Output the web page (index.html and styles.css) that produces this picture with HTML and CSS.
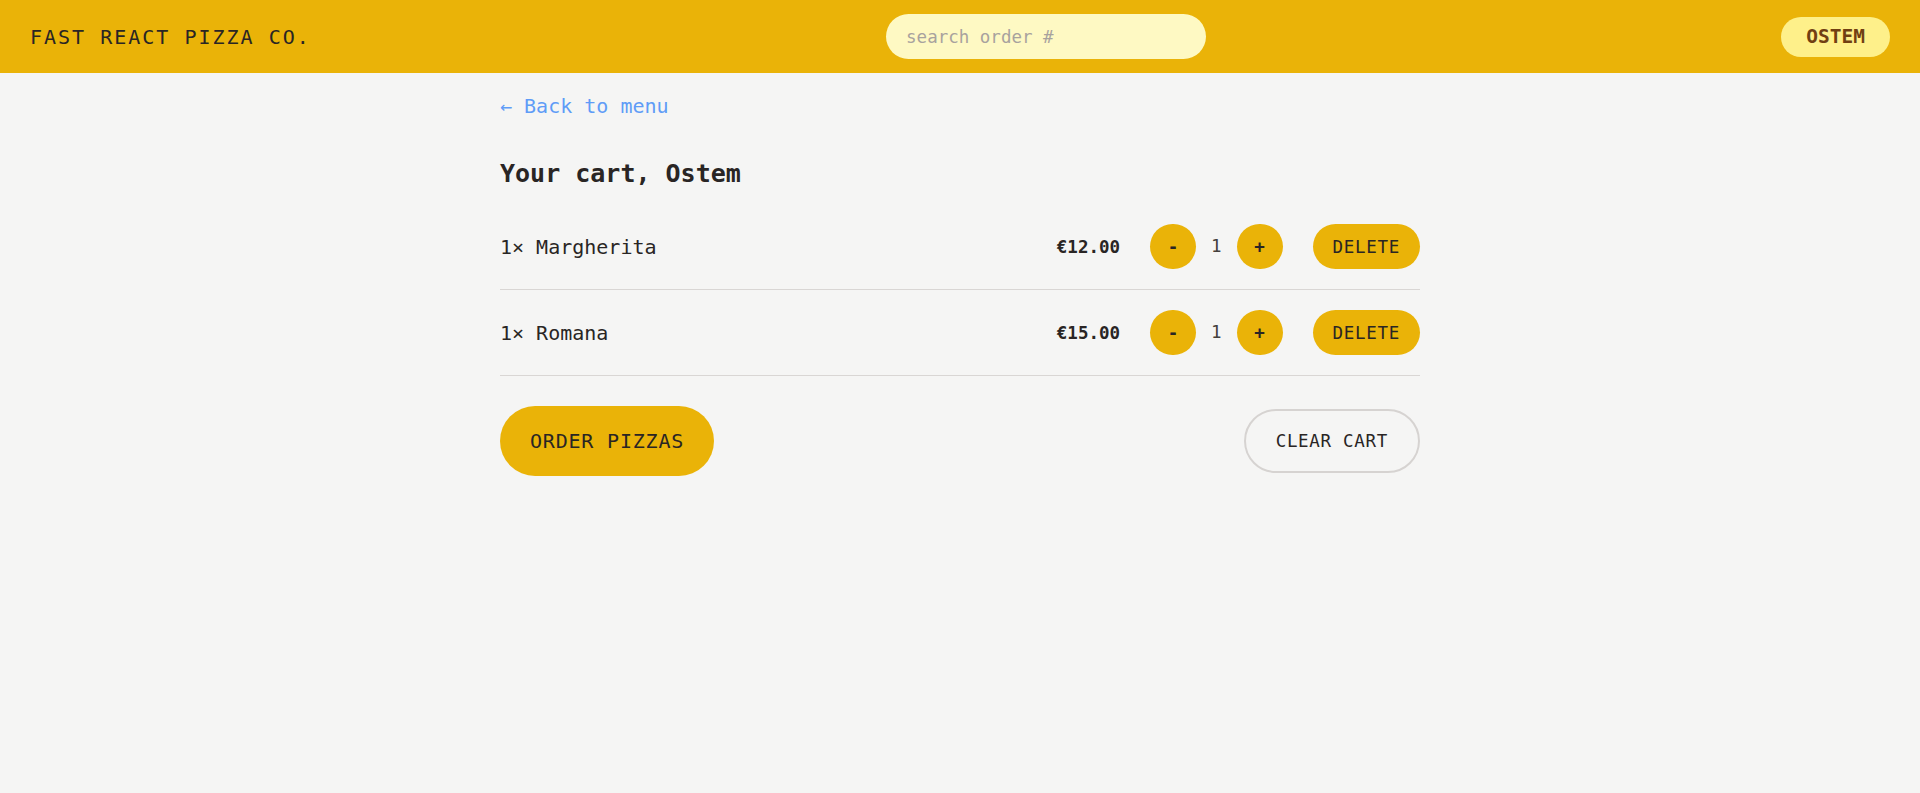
FILE: index.html
```html
<!DOCTYPE html>
<html lang="en">
<head>
<meta charset="utf-8">
<title>Fast React Pizza Co.</title>
<link rel="stylesheet" href="styles.css">
</head>
<body>
<header class="header">
  <a class="logo" href="#">Fast React Pizza Co.</a>
  <input class="search" type="text" placeholder="search order #">
  <div class="username">Ostem</div>
</header>
<main class="main">
  <a class="back" href="#">&larr; Back to menu</a>
  <h2 class="title">Your cart, Ostem</h2>
  <ul class="cart">
    <li class="item">
      <p class="item-name">1&times; Margherita</p>
      <div class="item-actions">
        <p class="price">€12.00</p>
        <div class="qty">
          <button class="btn-round">-</button>
          <span class="qty-num">1</span>
          <button class="btn-round">+</button>
        </div>
        <button class="btn-small">Delete</button>
      </div>
    </li>
    <li class="item">
      <p class="item-name">1&times; Romana</p>
      <div class="item-actions">
        <p class="price">€15.00</p>
        <div class="qty">
          <button class="btn-round">-</button>
          <span class="qty-num">1</span>
          <button class="btn-round">+</button>
        </div>
        <button class="btn-small">Delete</button>
      </div>
    </li>
  </ul>
  <div class="footer-actions">
    <button class="btn-primary">Order pizzas</button>
    <button class="btn-secondary">Clear cart</button>
  </div>
</main>
</body>
</html>
```

FILE: styles.css
```css
* { box-sizing: border-box; }
html, body { margin: 0; padding: 0; }
body {
  background: #f5f5f4;
  color: #292524;
  font-family: "DejaVu Sans Mono", "Liberation Mono", monospace;
  min-height: 793px;
}
.header {
  display: flex;
  align-items: center;
  justify-content: space-between;
  height: 73px;
  padding: 0 30px;
  background: #eab308;
  text-transform: uppercase;
}
.logo {
  font-size: 20px;
  letter-spacing: 0.1em;
  color: #292524;
  text-decoration: none;
}
.search {
  width: 320px;
  height: 45px;
  border: none;
  border-radius: 9999px;
  background: #fef9c3;
  padding: 0 20px;
  font-family: inherit;
  font-size: 17.5px;
  color: #292524;
  outline: none;
}
.search::placeholder { color: #a8a29e; }
.username {
  height: 40px;
  display: flex;
  align-items: center;
  padding: 0 25px;
  border-radius: 9999px;
  background: #fef08a;
  color: #713f12;
  font-size: 19.5px;
  font-weight: 700;
}
.main {
  width: 920px;
  margin: 0 auto;
  padding-top: 18px;
}
.back {
  display: inline-block;
  font-size: 20px;
  line-height: 30px;
  color: #5f9cf7;
  text-decoration: none;
}
.title {
  margin: 35px 0 0;
  font-size: 25px;
  line-height: 35px;
  font-weight: 700;
}
.cart {
  list-style: none;
  margin: 13px 0 0;
  padding: 0;
  border-bottom: 1px solid #d9d6d4;
}
.item {
  display: flex;
  align-items: center;
  justify-content: space-between;
  padding: 20px 0;
}
.item + .item { border-top: 1px solid #d9d6d4; }
.item-name {
  margin: 0;
  font-size: 20px;
  line-height: 30px;
}
.item-actions {
  display: flex;
  align-items: center;
  gap: 30px;
}
.price {
  margin: 0;
  font-size: 17.5px;
  font-weight: 700;
}
.qty {
  display: flex;
  align-items: center;
  gap: 15px;
}
.qty-num {
  font-size: 17.5px;
  line-height: 25px;
  color: #44403c;
}
button {
  font-family: inherit;
  border: none;
  cursor: pointer;
  color: #292524;
  text-transform: uppercase;
  letter-spacing: 0.7px;
  font-weight: 400;
}
.btn-round {
  width: 46px;
  height: 45px;
  border-radius: 9999px;
  background: #eab308;
  font-size: 17.5px;
  font-weight: 700;
  letter-spacing: 0;
  padding: 0;
}
.btn-small {
  height: 45px;
  padding: 0 20px;
  border-radius: 9999px;
  background: #eab308;
  font-size: 17.5px;
}
.footer-actions {
  display: flex;
  align-items: center;
  justify-content: space-between;
  margin-top: 30px;
}
.btn-primary {
  height: 70px;
  padding: 0 30px;
  border-radius: 9999px;
  background: #eab308;
  font-size: 20px;
  letter-spacing: 0.8px;
}
.btn-secondary {
  height: 64px;
  padding: 0 30px;
  border-radius: 9999px;
  background: transparent;
  border: 2.5px solid #d6d3d1;
  font-size: 17.5px;
}
```
